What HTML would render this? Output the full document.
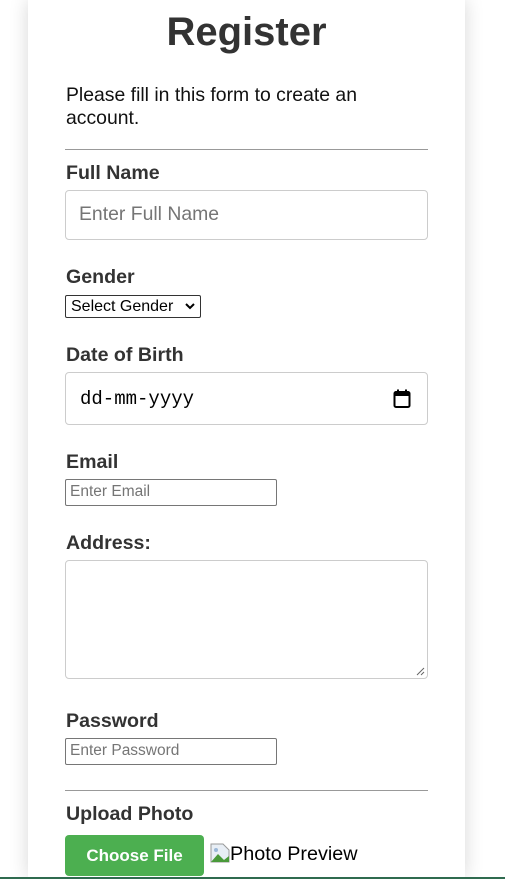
<!DOCTYPE html>
<html><head><meta charset="utf-8"><style>
html,body{margin:0;padding:0;width:505px;height:879px;overflow:hidden;background:#fff;font-family:"Liberation Sans",Arial,sans-serif;position:relative}
.card{position:absolute;left:28px;top:0;width:437px;height:877px;background:#fff;box-shadow:0 0 18px rgba(0,0,0,0.16)}
.a{position:absolute}
h1{position:absolute;margin:0;left:0;width:493px;text-align:center;top:10px;font-size:40px;font-weight:bold;color:#333}
.lbl{position:absolute;left:66px;font-weight:bold;font-size:19.6px;color:#333}
hr{position:absolute;left:65px;width:363px;margin:0;border:0;border-top:1px solid #999;height:0}
.big{position:absolute;left:65px;width:361px;border:1px solid #ccc;border-radius:4px;background:#fff;box-sizing:border-box}
.small{position:absolute;left:65px;width:212px;height:27px;border:1px solid #767676;border-radius:2px;box-sizing:border-box;font-size:15.5px;color:#757575;padding:3px 4px;line-height:18px}
</style></head><body>
<div class="card"></div>
<h1>Register</h1>
<div class="a" style="left:66px;top:84px;font-size:19.4px;line-height:23px;color:#111;width:340px">Please fill in this form to create an account.</div>
<hr style="top:149px">
<div class="lbl" style="top:162px">Full Name</div>
<div class="big" style="top:190px;height:50px;width:363px;font-size:19.4px;color:#757575;padding:12px 13px">Enter Full Name</div>
<div class="lbl" style="top:266px">Gender</div>
<div class="a" style="left:65px;top:295px;width:136px;height:23px;border:1px solid #333;border-radius:2px;box-sizing:border-box;font-size:16px;color:#000;padding:2px 0 0 5px;line-height:17px">Select Gender
<svg style="position:absolute;right:5px;top:7px" width="10" height="7" viewBox="0 0 10 7"><path d="M1 1L5 5L9 1" stroke="#000" stroke-width="2" fill="none"/></svg></div>
<div class="lbl" style="top:344px">Date of Birth</div>
<div class="big" style="top:372px;height:53px;width:363px;font-family:'Liberation Mono',monospace;font-size:19px;color:#000;padding:15px 14px">dd-mm-yyyy
<svg style="position:absolute;right:16px;top:16px" width="18" height="20" viewBox="0 0 18 20"><rect x="1.5" y="3" width="15" height="15" rx="1.5" stroke="#000" stroke-width="2" fill="none"/><rect x="1.5" y="3" width="15" height="4" fill="#000"/><rect x="4" y="0.5" width="2" height="4" fill="#000"/><rect x="12" y="0.5" width="2" height="4" fill="#000"/></svg></div>
<div class="lbl" style="top:451px">Email</div>
<div class="small" style="top:479px">Enter Email</div>
<div class="lbl" style="top:532px">Address:</div>
<div class="big" style="top:560px;height:119px;width:363px">
<svg style="position:absolute;right:2px;bottom:2px" width="9" height="9"><path d="M8 1L1 8M8 5L5 8" stroke="#666" stroke-width="1"/></svg></div>
<div class="lbl" style="top:710px">Password</div>
<div class="small" style="top:738px">Enter Password</div>
<hr style="top:790px">
<div class="lbl" style="top:803px">Upload Photo</div>
<div class="a" style="left:65px;top:835px;width:139px;height:41px;background:#4caf50;border-radius:4px;color:#fff;font-weight:bold;font-size:17px;text-align:center;line-height:41px">Choose File</div>
<div class="a" style="left:210px;top:843px;height:24px;background:#fff;font-size:19.8px;color:#000;line-height:23px;padding-right:3px">
<svg style="vertical-align:-3px" width="20" height="20" viewBox="0 0 20 20"><path d="M1 1H13L19 7V19H1Z" fill="#e8eef5" stroke="#999"/><path d="M1 19L8 11L14 17L19 13V19Z" fill="#4a9a3a"/><circle cx="6" cy="7" r="2" fill="#9bb8d8"/></svg>Photo Preview</div>
<div class="a" style="left:0;top:877px;width:505px;height:2px;background:#2f6b4f"></div>
</body></html>
